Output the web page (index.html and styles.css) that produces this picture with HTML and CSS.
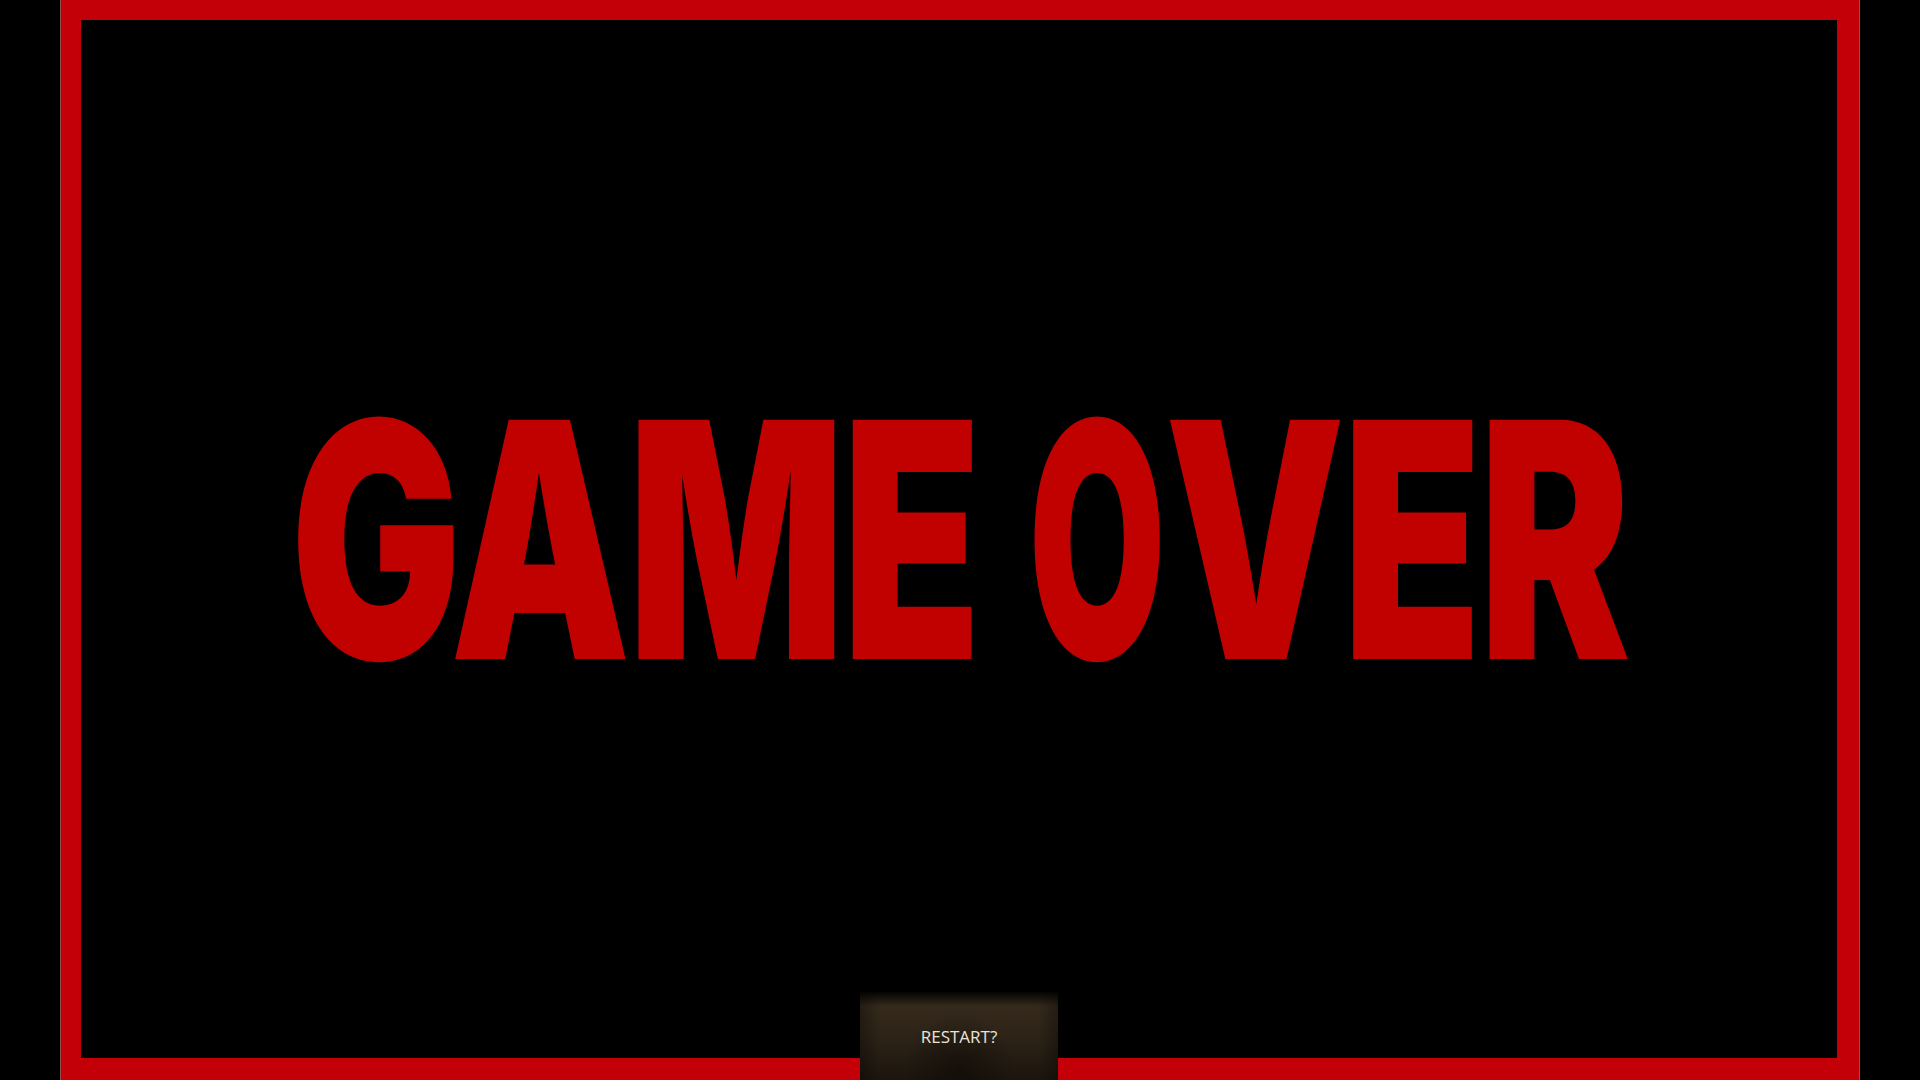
FILE: index.html
```html
<!DOCTYPE html>
<html lang="en">
<head>
    <meta charset="UTF-8">
    <meta name="viewport" content="width=device-width, initial-scale=1.0">
    <title>Game Over</title>
    <link rel="stylesheet" href="styles.css">
</head>
<body>
    <div class="screen-frame">
        <!-- Big end-of-game title -->
        <h1 class="game-over">GAME <span class="tight">O</span>VER</h1>

        <!-- Restart button sits over the bottom edge of the frame -->
        <button class="restart-btn" id="restart-btn">RESTART?</button>
    </div>
</body>
</html>
```
FILE: styles.css
```css
html, body {
    margin: 0;
    padding: 0;
    height: 100%;
}
body {
    background-color: #000;
    overflow: hidden;
    font-family: 'Open Sans', 'Noto Sans', sans-serif;
}
.screen-frame {
    position: relative;
    box-sizing: border-box;
    width: 1798px;
    height: 1080px;
    margin: 0 auto;
    border-style: solid;
    border-color: #c30008;
    border-width: 20px 22px 22px 20px;
    box-shadow: -1px 0 0 rgba(255, 150, 150, 0.55), 1px 0 0 rgba(255, 150, 150, 0.55);
    display: flex;
    justify-content: center;
    align-items: center;
}
.game-over {
    margin: 0;
    font-family: Inter, 'DejaVu Sans', sans-serif;
    font-weight: 900;
    font-size: 329px;
    line-height: 1;
    letter-spacing: -0.012em;
    color: #c10000;
    white-space: nowrap;
    transform: scaleX(0.69);
}
/* the round O is much wider than the rest, squeeze it */
.game-over .tight {
    display: inline-block;
    transform: scaleX(0.78);
    margin: 0 -0.08em 0 -0.05em;
}
.restart-btn {
    position: absolute;
    left: 50%;
    bottom: -22px;
    transform: translateX(-50%);
    width: 198px;
    height: 88px;
    padding: 33px 0 0;
    box-sizing: border-box;
    border: none;
    display: flex;
    justify-content: center;
    align-items: flex-start;
    font-family: 'Open Sans', 'Noto Sans', sans-serif;
    font-size: 17px;
    line-height: 24px;
    color: #ebe4d6;
    cursor: pointer;
    background-color: #261c12;
    background-image:
        linear-gradient(to bottom, rgba(0, 0, 0, 0.9) 0px, rgba(0, 0, 0, 0) 14px),
        linear-gradient(to right, rgba(0, 0, 0, 0.3) 0%, rgba(0, 0, 0, 0) 10%, rgba(0, 0, 0, 0) 90%, rgba(0, 0, 0, 0.3) 100%),
        radial-gradient(ellipse 28% 60% at 50% 85%, rgba(0, 0, 0, 0.4), rgba(0, 0, 0, 0) 100%),
        linear-gradient(to bottom, #34291b 18%, #2c2217 55%, #1c150d 100%);
}
```
